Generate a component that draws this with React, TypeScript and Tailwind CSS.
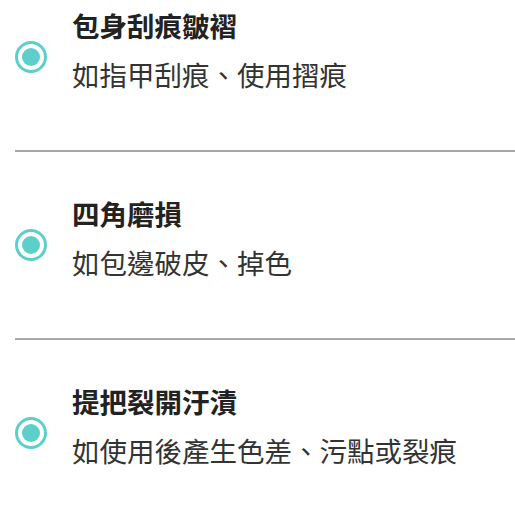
const options = [
  { title: '包身刮痕皺褶', desc: '如指甲刮痕、使用摺痕' },
  { title: '四角磨損', desc: '如包邊破皮、掉色' },
  { title: '提把裂開汙漬', desc: '如使用後產生色差、污點或裂痕' },
];

function Radio() {
  return (
    <div className="w-[32px] h-[32px] rounded-full border-[3px] border-[#5ccfcb] flex items-center justify-center shrink-0">
      <div className="w-[18px] h-[18px] rounded-full bg-[#5ccfcb]" />
    </div>
  );
}

export default function App() {
  return (
    <div
      className="w-[515px] h-[514px] overflow-hidden bg-white"
      style={{ fontFamily: '"Noto Sans CJK TC", "Noto Sans", sans-serif' }}
    >
      <div className="-mt-[36px]">
        {options.map((o, i) => (
          <div key={i} className="pl-[15px]">
            <div className="h-[186px] flex items-center">
              <Radio />
              <div className="self-start pt-[45px] pl-[25px]">
                <div className="text-[27.5px] leading-[32px] font-bold text-[#222]">{o.title}</div>
                <div className="mt-[17px] text-[27.5px] leading-[32px] text-[#333]">{o.desc}</div>
              </div>
            </div>
            {i < options.length - 1 && <div className="h-[2px] bg-[#a8a8a8]" />}
          </div>
        ))}
      </div>
    </div>
  );
}
